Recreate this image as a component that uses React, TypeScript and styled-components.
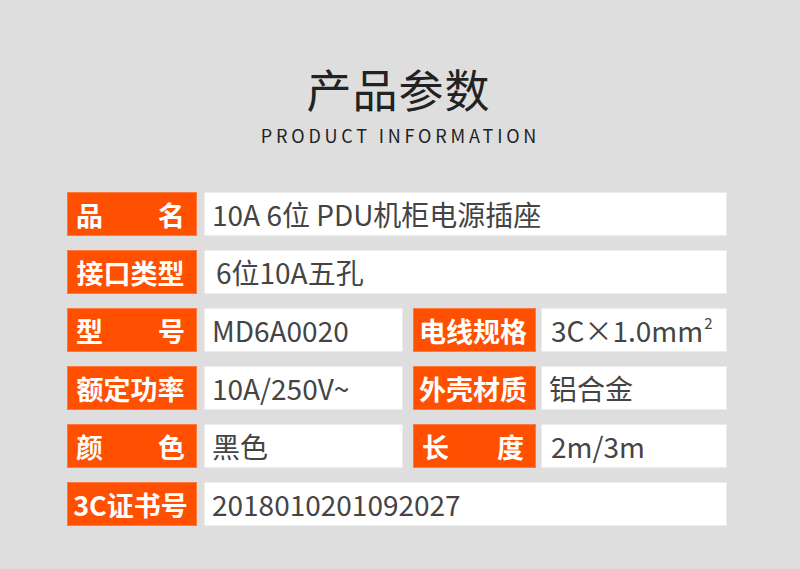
import React from "react";
import styled, { createGlobalStyle } from "styled-components";

const GlobalStyle = createGlobalStyle`
  html, body {
    margin: 0;
    padding: 0;
    background: #dedede;
  }
  body {
    font-family: "Noto Sans CJK SC", "Noto Sans", sans-serif;
  }
`;

const Page = styled.div`
  width: 800px;
  height: 569px;
  background: #dedede;
  padding-top: 64px;
  box-sizing: border-box;
  overflow: hidden;
`;

const Header = styled.div`
  display: flex;
  flex-direction: column;
  align-items: center;
  padding-right: 3px;
`;

const Title = styled.h1`
  margin: 0;
  font-size: 45px;
  line-height: 50px;
  font-weight: 400;
  color: #222;
  letter-spacing: 1px;
`;

const Subtitle = styled.div`
  margin-top: 10px;
  font-size: 18px;
  line-height: 22px;
  letter-spacing: 3.8px;
  color: #222;
  padding-left: 4px;
`;

const Table = styled.div`
  margin: 46px 0 0 67px;
  width: 660px;
  display: flex;
  flex-direction: column;
  gap: 14px;
`;

const Row = styled.div`
  display: flex;
  height: 44px;
`;

const Label = styled.div<{ $w: number; $ml?: number; $spread?: boolean }>`
  width: ${(p) => p.$w}px;
  margin-left: ${(p) => p.$ml ?? 0}px;
  box-sizing: border-box;
  background: #fe5000;
  border: 1px solid #ff7a40;
  color: #fff;
  font-size: 27px;
  font-weight: 700;
  display: flex;
  align-items: center;
  justify-content: ${(p) => (p.$spread ? "space-between" : "center")};
  padding: 0 11px 0 8px;
  white-space: nowrap;
`;

const Value = styled.div<{ $w: number; $ml?: number; $pad?: number }>`
  width: ${(p) => p.$w}px;
  margin-left: ${(p) => p.$ml ?? 7}px;
  box-sizing: border-box;
  background: #fff;
  border: 1px solid #ececec;
  color: #444;
  font-size: 28px;
  display: flex;
  align-items: center;
  padding-left: ${(p) => p.$pad ?? 7}px;
  white-space: nowrap;
`;

const Sup = styled.sup`
  font-size: 15px;
  line-height: 0;
  position: relative;
  top: -3px;
  margin-left: 1px;
`;

type Cell = { label: string; value: React.ReactNode; pad?: number };

const spread = (label: string) => label.includes(" ");

const LabelText = ({ text }: { text: string }) =>
  spread(text) ? (
    <>
      {text.split(" ").filter(Boolean).map((c) => (
        <span key={c}>{c}</span>
      ))}
    </>
  ) : (
    <>{text}</>
  );

const FullRow = ({ label, value, pad }: Cell) => (
  <Row>
    <Label $w={130} $spread={spread(label)}>
      <LabelText text={label} />
    </Label>
    <Value $w={523} $pad={pad}>
      {value}
    </Value>
  </Row>
);

const HalfRow = ({ left, right }: { left: Cell; right: Cell }) => (
  <Row>
    <Label $w={130} $spread={spread(left.label)}>
      <LabelText text={left.label} />
    </Label>
    <Value $w={199} $pad={left.pad}>
      {left.value}
    </Value>
    <Label $w={123} $ml={10} $spread={spread(right.label)}>
      <LabelText text={right.label} />
    </Label>
    <Value $w={186} $ml={5} $pad={right.pad}>
      {right.value}
    </Value>
  </Row>
);

export default function App() {
  return (
    <Page>
      <GlobalStyle />
      <Header>
        <Title>产品参数</Title>
        <Subtitle>PRODUCT INFORMATION</Subtitle>
      </Header>
      <Table>
        <FullRow label="品 名" value="10A 6位 PDU机柜电源插座" />
        <FullRow label="接口类型" value="6位10A五孔" pad={11} />
        <HalfRow
          left={{ label: "型 号", value: "MD6A0020" }}
          right={{
            label: "电线规格",
            pad: 9,
            value: (
              <span>
                3C×1.0mm<Sup>2</Sup>
              </span>
            ),
          }}
        />
        <HalfRow
          left={{ label: "额定功率", value: "10A/250V~" }}
          right={{ label: "外壳材质", value: "铝合金" }}
        />
        <HalfRow
          left={{ label: "颜 色", value: "黑色" }}
          right={{ label: "长 度", value: "2m/3m", pad: 9 }}
        />
        <FullRow label="3C证书号" value="2018010201092027" />
      </Table>
    </Page>
  );
}
